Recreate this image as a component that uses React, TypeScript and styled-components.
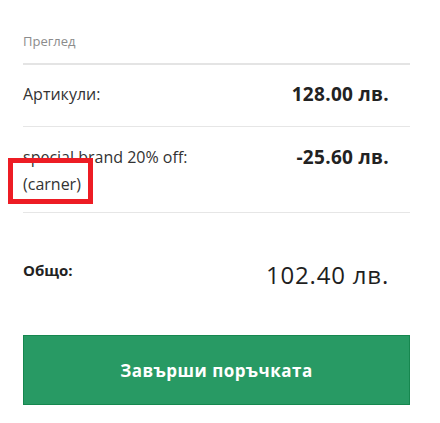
import React from 'react';
import styled, { createGlobalStyle } from 'styled-components';

const GlobalStyle = createGlobalStyle`
  html, body {
    margin: 0;
    padding: 0;
    background: #ffffff;
  }
  body {
    font-family: 'Open Sans', 'Noto Sans', sans-serif;
    color: #333333;
  }
`;

const Summary = styled.section`
  width: 387px;
  padding-left: 23px;
`;

const Heading = styled.div`
  padding: 32px 0 13px;
  font-size: 13px;
  line-height: 18px;
  color: #8c8c8c;
  border-bottom: 2px solid #e4e4e4;
`;

const Row = styled.div<{ $top: number; $bottom: number; $divider?: boolean }>`
  display: flex;
  justify-content: space-between;
  align-items: flex-start;
  padding: ${(p) => p.$top}px 21px ${(p) => p.$bottom}px 0;
  border-bottom: ${(p) => (p.$divider ? '1px solid #e6e6e6' : 'none')};
`;

const Label = styled.div<{ $lh: number }>`
  position: relative;
  max-width: 200px;
  font-size: 16px;
  line-height: ${(p) => p.$lh}px;
  color: #333333;
`;

const Value = styled.div<{ $lh: number }>`
  font-size: 19px;
  font-weight: 700;
  letter-spacing: 0.3px;
  line-height: ${(p) => p.$lh}px;
  color: #222222;
  white-space: nowrap;
`;

const TotalLabel = styled.div`
  font-size: 15px;
  font-weight: 700;
  line-height: 22px;
  color: #222222;
`;

const TotalValue = styled.div`
  font-size: 24px;
  font-weight: 400;
  letter-spacing: 0.8px;
  line-height: 32px;
  color: #1f1f1f;
  white-space: nowrap;
`;

const Marker = styled.span`
  position: absolute;
  left: -15px;
  top: 14px;
  width: 85px;
  height: 46px;
  box-sizing: border-box;
  border: 5px solid #ed1c24;
  pointer-events: none;
`;

const CheckoutButton = styled.button`
  display: block;
  width: 387px;
  height: 70px;
  margin-top: 44px;
  box-sizing: border-box;
  background: #289a64;
  border: 1px solid #16874f;
  border-radius: 0;
  color: #ffffff;
  font-family: inherit;
  font-size: 17px;
  font-weight: 700;
  letter-spacing: 0.5px;
  cursor: pointer;
`;

export default function App() {
  return (
    <>
      <GlobalStyle />
      <Summary>
        <Heading>Преглед</Heading>
        <Row $top={17} $bottom={20} $divider>
          <Label $lh={24}>Артикули:</Label>
          <Value $lh={24}>128.00 лв.</Value>
        </Row>
        <Row $top={17} $bottom={14} $divider>
          <Label $lh={27}>
            special brand 20% off: (carner)
            <Marker />
          </Label>
          <Value $lh={27}>-25.60 лв.</Value>
        </Row>
        <Row $top={46} $bottom={0}>
          <TotalLabel>Общо:</TotalLabel>
          <TotalValue>102.40 лв.</TotalValue>
        </Row>
        <CheckoutButton>Завърши поръчката</CheckoutButton>
      </Summary>
    </>
  );
}
